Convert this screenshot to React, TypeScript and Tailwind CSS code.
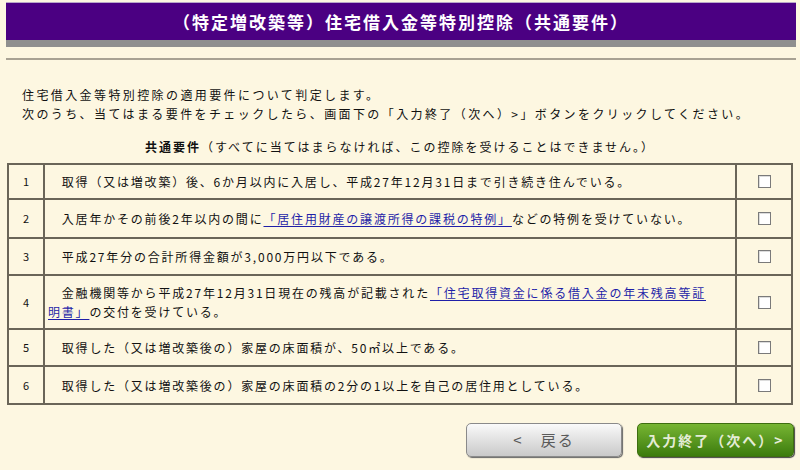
import React from "react";

const font = { fontFamily: '"Noto Sans CJK JP", "Noto Sans", sans-serif' };
const SP = "\u3000";

function Check() {
  return (
    <div className="mx-auto h-[13px] w-[13px] border border-[#7a7a7a] bg-white shadow-[inset_1px_1px_0_#dcdcdc]" />
  );
}

function Link({ children }: { children: React.ReactNode }) {
  return <span className="text-[#1f1fa8] underline underline-offset-2">{children}</span>;
}

const rows: { h: string; content: React.ReactNode }[] = [
  {
    h: "h-[35px]",
    content: <>{SP}取得（又は増改築）後、6か月以内に入居し、平成27年12月31日まで引き続き住んでいる。</>,
  },
  {
    h: "h-[39px]",
    content: (
      <>
        {SP}入居年かその前後2年以内の間に<Link>「居住用財産の譲渡所得の課税の特例」</Link>などの特例を受けていない。
      </>
    ),
  },
  {
    h: "h-[37px]",
    content: <>{SP}平成27年分の合計所得金額が3,000万円以下である。</>,
  },
  {
    h: "h-[54px]",
    content: (
      <>
        {SP}金融機関等から平成27年12月31日現在の残高が記載された<Link>「住宅取得資金に係る借入金の年末残高等証明書」</Link>の交付を受けている。
      </>
    ),
  },
  {
    h: "h-[37px]",
    content: <>{SP}取得した（又は増改築後の）家屋の床面積が、50㎡以上である。</>,
  },
  {
    h: "h-[38px]",
    content: <>{SP}取得した（又は増改築後の）家屋の床面積の2分の1以上を自己の居住用としている。</>,
  },
];

export default function App() {
  return (
    <div className="h-[470px] w-[800px] overflow-hidden bg-[#fdf7e1] px-[6px] pt-[2px] text-[#111]" style={font}>
      <div className="w-[790px]">
        <div className="flex h-[38px] items-center justify-center border-t border-[#b9a7c9] bg-[#4b0082]">
          <span className="text-[17px] font-bold tracking-[2px] text-white">（特定増改築等）住宅借入金等特別控除（共通要件）</span>
        </div>
        <div className="h-[7px] bg-[#8f8f8f]" />
      </div>
      <div className="mt-[11px] h-[2px] w-[790px] bg-[#a8a293]" />

      <div className="mt-[25px] pl-[16px] text-[12px] leading-[19px] tracking-[2.4px]">
        <div>住宅借入金等特別控除の適用要件について判定します。</div>
        <div>次のうち、当てはまる要件をチェックしたら、画面下の「入力終了（次へ）&gt;」ボタンをクリックしてください。</div>
      </div>

      <div className="mt-[14px] text-center text-[12px] leading-[19px] tracking-[2px]">
        <span className="font-bold">共通要件</span>（すべてに当てはまらなければ、この控除を受けることはできません。）
      </div>

      <table className="mt-[7px] ml-[1px] w-[786px] border-collapse border-2 border-[#6a6558] text-[12px] tracking-[1.8px]">
        <tbody>
          {rows.map((r, i) => (
            <tr key={i} className={r.h}>
              <td className="w-[36px] border-2 border-[#6a6558] text-center align-middle text-[11px] tracking-normal">{i + 1}</td>
              <td className="border-2 border-[#6a6558] py-[2px] pl-[3px] pr-[16px] align-middle leading-[19px]">{r.content}</td>
              <td className="w-[56px] border-2 border-[#6a6558] align-middle">
                <Check />
              </td>
            </tr>
          ))}
        </tbody>
      </table>

      <div className="mt-[18px] flex justify-end gap-[15px]">
        <button className="flex h-[34px] w-[156px] items-center justify-center rounded-[5px] border border-[#8a8a8a] bg-gradient-to-b from-[#fafafa] to-[#c9c9c9] text-[15px] tracking-[2px] text-[#5a5a5a] shadow-[1px_1px_1px_#666]">
          &lt;　戻る
        </button>
        <button className="flex h-[34px] w-[157px] items-center justify-center rounded-[5px] border border-[#3e6e10] bg-gradient-to-b from-[#77b532] to-[#3c7c0c] text-[14px] font-bold tracking-[2px] text-[#e4ecd6] shadow-[1px_1px_1px_#444]">
          入力終了（次へ）&gt;
        </button>
      </div>
    </div>
  );
}
